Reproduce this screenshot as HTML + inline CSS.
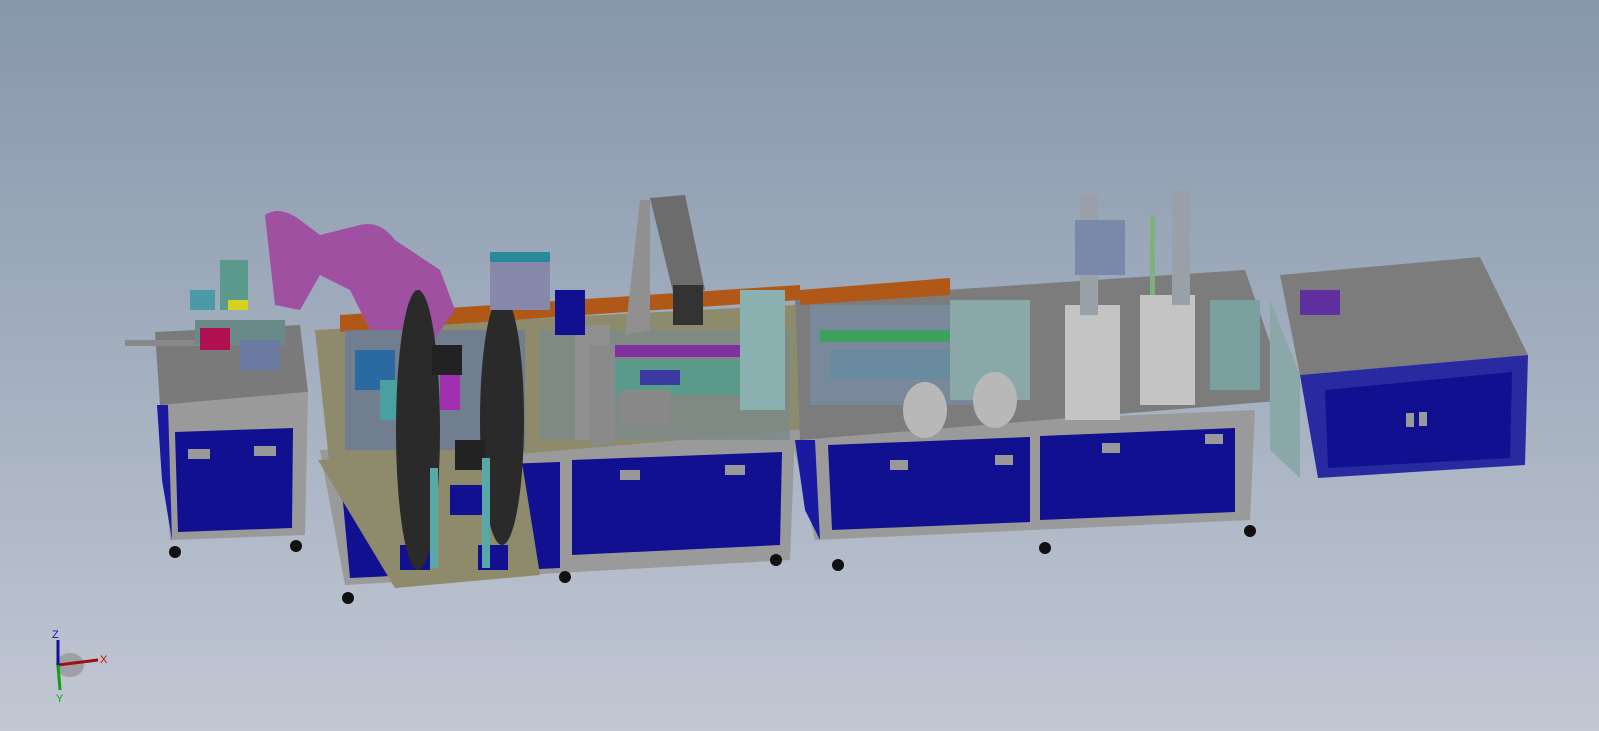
<!DOCTYPE html>
<html><head><meta charset="utf-8"><style>
html,body{margin:0;padding:0;width:1599px;height:731px;overflow:hidden}
body{background:linear-gradient(#8797ac 0%,#a3afbf 50%,#c2c7d3 100%)}
svg{position:absolute;left:0;top:0}
</style></head><body>
<svg width="1599" height="731" viewBox="0 0 1599 731" font-family="Liberation Sans, sans-serif">
<!-- left cart -->
<polygon points="155,332 300,325 308,392 160,405" fill="#7a7a7a"/>
<polygon points="160,405 308,392 305,535 170,540" fill="#9a9a9a"/>
<polygon points="175,432 293,428 292,528 178,532" fill="#101090"/>
<rect x="188" y="449" width="22" height="10" fill="#999"/><rect x="254" y="446" width="22" height="10" fill="#999"/>
<polygon points="157,405 168,405 172,540 162,480" fill="#1a1aa0"/>
<circle cx="175" cy="552" r="6" fill="#111"/><circle cx="296" cy="546" r="6" fill="#111"/>
<rect x="125" y="340" width="80" height="6" fill="#888"/>
<rect x="195" y="320" width="90" height="25" fill="#6a8a8a"/>
<rect x="200" y="328" width="30" height="22" fill="#b01050"/>
<rect x="220" y="260" width="28" height="50" fill="#5a9a8a"/>
<rect x="190" y="290" width="25" height="20" fill="#4a9aaa"/>
<rect x="228" y="300" width="20" height="10" fill="#d8d020"/>
<rect x="240" y="340" width="40" height="30" fill="#6a7aa0"/>
<!-- table 1 cabinets -->
<polygon points="320,450 795,430 790,560 345,585" fill="#9a9a9a"/>
<polygon points="340,470 560,462 560,568 350,578" fill="#101090"/>
<polygon points="572,460 782,452 780,545 572,555" fill="#101090"/>
<rect x="620" y="470" width="20" height="10" fill="#999"/><rect x="725" y="465" width="20" height="10" fill="#999"/>
<circle cx="348" cy="598" r="6" fill="#111"/><circle cx="565" cy="577" r="6" fill="#111"/><circle cx="776" cy="560" r="6" fill="#111"/>
<!-- table 1 top -->
<polygon points="315,330 795,305 800,430 330,470" fill="#8e8a6c"/>
<polygon points="340,315 800,285 800,300 340,332" fill="#b05818"/>
<polygon points="318,460 520,450 540,575 395,588" fill="#8e8a6c"/>
<rect x="450" y="485" width="50" height="30" fill="#101090"/>
<rect x="400" y="545" width="30" height="25" fill="#101090"/><rect x="478" y="545" width="30" height="25" fill="#101090"/>
<!-- machinery table 1 -->
<rect x="345" y="330" width="180" height="120" fill="#6a7a9a" opacity=".8"/>
<rect x="355" y="350" width="40" height="40" fill="#2a6aa0"/>
<rect x="380" y="380" width="30" height="40" fill="#4aa0a0"/>
<rect x="440" y="360" width="20" height="50" fill="#a030b0"/>
<rect x="540" y="330" width="250" height="110" fill="#7a8a8a" opacity=".8"/>
<rect x="600" y="345" width="180" height="12" fill="#8030a0"/>
<rect x="610" y="360" width="160" height="35" fill="#5a9a8a"/>
<rect x="640" y="370" width="40" height="15" fill="#3a3aa0"/>
<rect x="750" y="365" width="30" height="15" fill="#c01020"/>
<rect x="575" y="325" width="35" height="115" fill="#909090"/>
<rect x="740" y="290" width="45" height="120" fill="#8ab0b0"/>
<rect x="620" y="390" width="50" height="35" fill="#888"/>
<!-- robot -->
<path d="M265,215 Q280,205 300,220 L320,235 L360,225 Q380,220 395,240 L440,270 L455,310 L430,345 L400,330 L370,330 L350,290 L320,275 L300,310 L275,305 Z" fill="#a050a0"/>
<!-- wheels -->
<ellipse cx="418" cy="430" rx="22" ry="140" fill="#2a2a2a"/>
<ellipse cx="502" cy="420" rx="22" ry="125" fill="#2a2a2a"/>
<rect x="432" y="345" width="30" height="30" fill="#222"/><rect x="455" y="440" width="30" height="30" fill="#222"/>
<rect x="482" y="458" width="8" height="110" fill="#58a8a8"/><rect x="430" y="468" width="8" height="100" fill="#58a8a8"/>
<!-- box near robot -->
<rect x="490" y="255" width="60" height="55" fill="#8888aa"/><rect x="490" y="252" width="60" height="10" fill="#2a8a9a"/>
<rect x="555" y="290" width="30" height="45" fill="#101090"/>
<!-- tower -->
<polygon points="640,200 650,200 650,330 625,335" fill="#909090"/>
<polygon points="650,198 685,195 705,290 675,300" fill="#6c6c6c"/>
<rect x="673" y="285" width="30" height="40" fill="#333"/>
<rect x="590" y="345" width="25" height="100" fill="#8a8a8a"/>
<!-- table 2 cabinets -->
<polygon points="790,430 1255,410 1250,520 815,540" fill="#9a9a9a"/>
<polygon points="828,445 1030,437 1030,522 832,530" fill="#101090"/>
<polygon points="1040,436 1235,428 1235,512 1040,520" fill="#101090"/>
<polygon points="795,440 815,440 820,540 805,510" fill="#1a1aa0"/>
<rect x="890" y="460" width="18" height="10" fill="#999"/><rect x="995" y="455" width="18" height="10" fill="#999"/>
<rect x="1102" y="443" width="18" height="10" fill="#999"/><rect x="1205" y="434" width="18" height="10" fill="#999"/>
<circle cx="838" cy="565" r="6" fill="#111"/><circle cx="1045" cy="548" r="6" fill="#111"/><circle cx="1250" cy="531" r="6" fill="#111"/>
<!-- table 2 top -->
<polygon points="795,300 1245,270 1290,400 800,440" fill="#7c7c7c"/>
<polygon points="800,290 950,278 950,295 800,305" fill="#b05818"/>
<rect x="810" y="305" width="200" height="100" fill="#7a8aa0" opacity=".9"/>
<rect x="820" y="330" width="150" height="12" fill="#40a060"/>
<rect x="830" y="350" width="140" height="30" fill="#6a8aa0"/>
<rect x="950" y="300" width="80" height="100" fill="#8aa8a8"/>
<ellipse cx="925" cy="410" rx="22" ry="28" fill="#b8b8b8"/>
<ellipse cx="995" cy="400" rx="22" ry="28" fill="#b8b8b8"/>
<!-- presses -->
<rect x="1065" y="305" width="55" height="115" fill="#c4c4c4"/>
<rect x="1140" y="295" width="55" height="110" fill="#c4c4c4"/>
<rect x="1080" y="195" width="18" height="120" fill="#9aa0a8"/>
<rect x="1172" y="190" width="18" height="115" fill="#9aa0a8"/>
<rect x="1075" y="220" width="50" height="55" fill="#7a88aa"/>
<rect x="1150" y="215" width="5" height="80" fill="#80b080"/>
<rect x="1210" y="300" width="50" height="90" fill="#7aa0a0"/>
<!-- right cabinet -->
<polygon points="1280,275 1480,257 1528,355 1300,375" fill="#7c7c7c"/>
<polygon points="1270,300 1300,375 1300,478 1270,450" fill="#8aa8a8"/>
<polygon points="1300,375 1528,355 1525,465 1318,478" fill="#2a2aa0"/>
<polygon points="1325,390 1512,372 1510,458 1328,468" fill="#101090"/>
<rect x="1406" y="413" width="8" height="14" fill="#999"/><rect x="1419" y="412" width="8" height="14" fill="#999"/>
<rect x="1300" y="290" width="40" height="25" fill="#6030a0"/>
<!-- axis triad -->
<ellipse cx="70" cy="665" rx="14" ry="12" fill="#888" opacity=".6"/>
<line x1="58" y1="665" x2="98" y2="660" stroke="#a01010" stroke-width="3"/>
<line x1="58" y1="665" x2="58" y2="640" stroke="#1010a0" stroke-width="3"/>
<line x1="58" y1="665" x2="60" y2="690" stroke="#10a010" stroke-width="3"/>
<text x="100" y="663" font-size="11" fill="#c01010">X</text>
<text x="52" y="638" font-size="11" fill="#1010c0">Z</text>
<text x="56" y="702" font-size="11" fill="#10a010">Y</text>
</svg>
</body></html>
